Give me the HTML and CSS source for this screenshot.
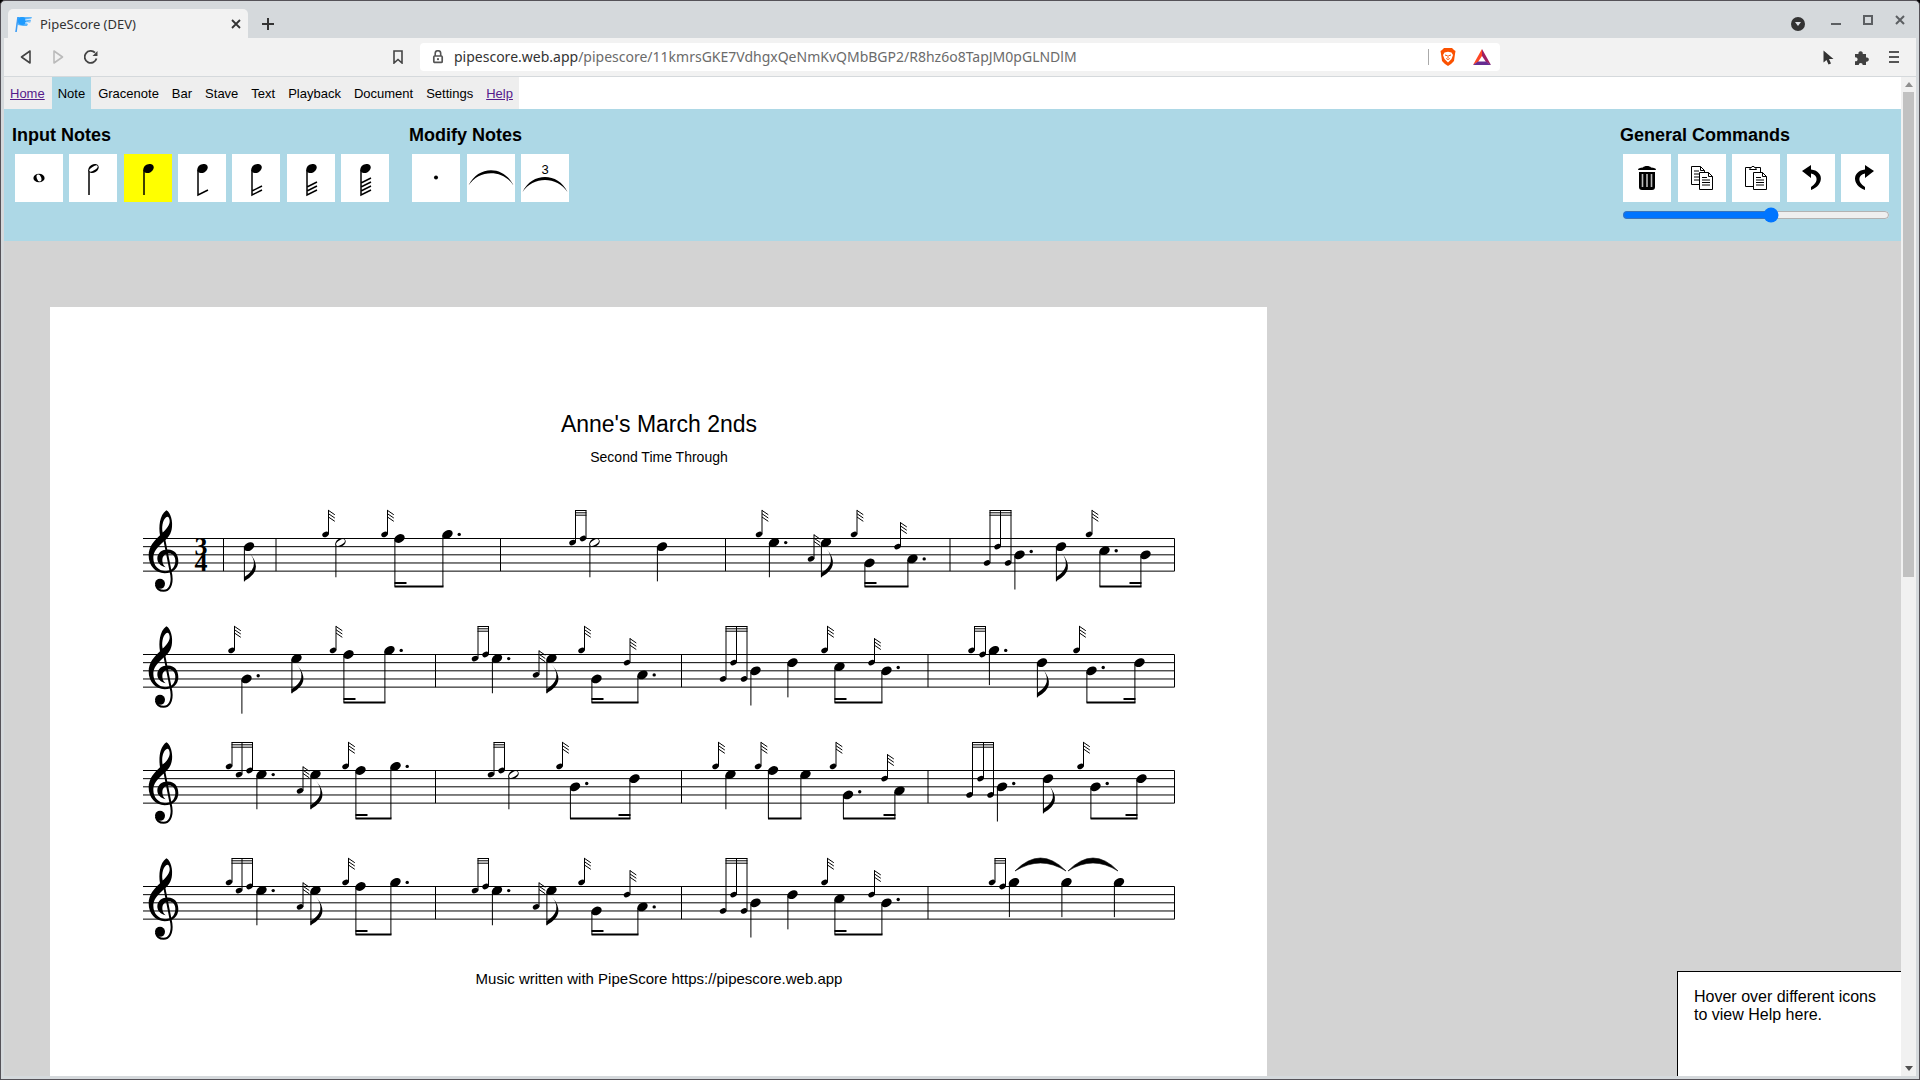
FILE: index.html
```html
<!DOCTYPE html>
<html lang="en">
<head>
<meta charset="utf-8">
<title>PipeScore (DEV)</title>
<link rel="stylesheet" href="styles.css">
</head>
<body>
<div class="window">
  <header class="tabstrip">
    <div class="tab">
      <svg class="tab-logo" width="18" height="18" viewBox="0 0 18 18"><path d="M1 17 3 2" stroke="#3d9df5" stroke-width="1.6" fill="none"/><circle cx="7" cy="6" r="4" fill="#1e9bff"/><path d="M3 2h14l-1 2-5 1 5 0-1 3-4 0 2 1-1 2-4 0-5-1z" fill="#1e9bff" opacity=".7"/><path d="M10 5l6-1M10 8l5-1" stroke="#cfe8ff" fill="none"/></svg>
      <span class="tab-title">PipeScore (DEV)</span>
      <button class="icon-btn" aria-label="Close tab"><svg width="10" height="10" viewBox="0 0 10 10"><path d="M1 1l8 8M9 1l-8 8" stroke="#333" stroke-width="1.8"/></svg></button>
    </div>
    <button class="icon-btn new-tab" aria-label="New tab"><svg width="12" height="12" viewBox="0 0 12 12"><path d="M6 0v12M0 6h12" stroke="#333" stroke-width="2"/></svg></button>
    <div class="window-controls">
      <button class="icon-btn" aria-label="Search tabs"><svg width="14" height="14" viewBox="0 0 14 14"><circle cx="7" cy="7" r="7" fill="#333"/><path d="M4 5h6l-3 4z" fill="#dee1e6"/></svg></button>
      <button class="icon-btn raised" aria-label="Minimise"><svg width="10" height="12" viewBox="0 0 10 12"><path d="M0 10h10" stroke="#5c5f62" stroke-width="2"/></svg></button>
      <button class="icon-btn raised" aria-label="Maximise"><svg width="10" height="10" viewBox="0 0 10 10"><path d="M1 1h8v8H1z" fill="none" stroke="#5c5f62" stroke-width="2"/></svg></button>
      <button class="icon-btn raised" aria-label="Close"><svg width="10" height="10" viewBox="0 0 10 10"><path d="M1 1l8 8M9 1l-8 8" stroke="#5c5f62" stroke-width="2"/></svg></button>
    </div>
  </header>
  <div class="toolbar">
    <div class="nav-buttons">
      <button class="icon-btn" aria-label="Back"><svg width="12" height="14" viewBox="0 0 12 14"><path d="M10 1v12L1.500 7z" fill="none" stroke="#444" stroke-width="1.600" stroke-linejoin="round"/></svg></button>
      <button class="icon-btn" aria-label="Forward"><svg width="12" height="14" viewBox="0 0 12 14"><path d="M2 1v12l8.500-6z" fill="none" stroke="#bbb" stroke-width="1.600" stroke-linejoin="round"/></svg></button>
      <button class="icon-btn" aria-label="Reload"><svg width="14" height="14" viewBox="0 0 14 14"><path d="M12.500 8.500A6 6 0 1 1 11 2.700" fill="none" stroke="#444" stroke-width="1.800"/><path d="M13.500 1v5H8.500z" fill="#444"/></svg></button>
    </div>
    <button class="icon-btn" aria-label="Bookmark"><svg width="10" height="14" viewBox="0 0 10 14"><path d="M1 1h8v12L5 9.500 1 13z" fill="none" stroke="#444" stroke-width="1.600"/></svg></button>
    <div class="address">
      <svg width="12" height="14" viewBox="0 0 12 14"><path d="M3.200 6V3.500a2.700 2.700 0 0 1 5.500 0V6" fill="none" stroke="#555" stroke-width="1.600"/><rect x="1.800" y="6" width="8.400" height="6.400" rx="1" fill="none" stroke="#555" stroke-width="1.700"/><circle cx="6" cy="9.200" r="1.100" fill="#555"/></svg>
      <span class="url">pipescore.web.app<span class="url-path">/pipescore/11kmrsGKE7VdhgxQeNmKvQMbBGP2/R8hz6o8TapJM0pGLNDlM</span></span>
      <span class="divider"></span>
      <svg class="shield" width="16" height="18" viewBox="0 0 16 18"><path d="M4 0h8l2 2 1.500 1-.5 3-1 7-3 3-3 2-3-2-3-3L1 6 .5 3 2 2z" fill="#fb5100"/><path d="M4.500 4.500 8 3.800l3.500.7L13 7l-1.500 4L8 14.500 4.500 11 3 7z" fill="#fff"/><path d="M5 7l2 .6M11 7l-2 .6M8 7v3M6.200 10.500 8 11.500l1.800-1" stroke="#fb5100" fill="none"/></svg>
      <svg width="18" height="16" viewBox="0 0 18 16"><path d="M9 0 0 16l5-3 4-6z" fill="#ff4724"/><path d="M9 0l9 16-5-3-4-6z" fill="#9e1f63"/><path d="M0 16h18l-5-3.500H5z" fill="#662d91"/></svg>
    </div>
    <div class="extensions">
      <button class="icon-btn" aria-label="Pointer extension"><svg width="11" height="15" viewBox="0 0 11 15"><path d="M.5.500v12l3-2.500 2 4.500 2.500-1-2-4.500h4.500z" fill="#333"/></svg></button>
      <button class="icon-btn" aria-label="Extensions"><svg width="15" height="15" viewBox="0 0 15 15"><path d="M1 4h3.500a2.200 2.200 0 1 1 4.200 0H12v3.500a2.200 2.200 0 1 1 0 4.200V15H8.700a2 2 0 1 0-4 0H1v-3.800a2 2 0 1 0 0-3.800z" fill="#404040"/></svg></button>
      <button class="icon-btn" aria-label="Menu"><svg width="10" height="12" viewBox="0 0 10 12"><path d="M0 1h10M0 6h10M0 11h10" stroke="#555" stroke-width="2"/></svg></button>
    </div>
  </div>

  <div class="viewport">
    <div class="app">
      <nav class="menu">
        <a class="menu-item" href="#home">Home</a>
        <button class="menu-item selected">Note</button>
        <button class="menu-item">Gracenote</button>
        <button class="menu-item">Bar</button>
        <button class="menu-item">Stave</button>
        <button class="menu-item">Text</button>
        <button class="menu-item">Playback</button>
        <button class="menu-item">Document</button>
        <button class="menu-item">Settings</button>
        <a class="menu-item" href="#help">Help</a>
      </nav>
      <div class="panel">
        <section class="group input-group">
          <h2>Input Notes</h2>
          <div class="tools">
            <button class="tool" aria-label="Semibreve"><svg viewBox="0 0 48 48"><ellipse cx="24" cy="24" rx="5.600" ry="4.300"/><ellipse cx="24" cy="24" rx="2.200" ry="3.600" fill="#fff" transform="rotate(-20 24 24)"/></svg></button>
            <button class="tool" aria-label="Minim"><svg viewBox="0 0 48 48"><path d="M20 16v25" class="line"/><ellipse cx="24.500" cy="14.500" rx="5.600" ry="4" transform="rotate(-30 24.500 14.500)"/><ellipse cx="24.500" cy="14.500" rx="4.800" ry="1.900" fill="#fff" transform="rotate(-32 24.500 14.500)"/></svg></button>
            <button class="tool active" aria-label="Crotchet"><svg viewBox="0 0 48 48"><path d="M20 16v25" class="line"/><ellipse cx="24.500" cy="14.500" rx="5.600" ry="4.200" transform="rotate(-30 24.500 14.500)"/></svg></button>
            <button class="tool" aria-label="Quaver"><svg viewBox="0 0 48 48"><path d="M20 16v25l10-5" class="line"/><ellipse cx="24.500" cy="14.500" rx="5.600" ry="4.200" transform="rotate(-30 24.500 14.500)"/></svg></button>
            <button class="tool" aria-label="Semiquaver"><svg viewBox="0 0 48 48"><path d="M20 16v25l10-5M20 37l10-5" class="line"/><ellipse cx="24.500" cy="14.500" rx="5.600" ry="4.200" transform="rotate(-30 24.500 14.500)"/></svg></button>
            <button class="tool" aria-label="Demisemiquaver"><svg viewBox="0 0 48 48"><path d="M20 16v25l10-5M20 37l10-5M20 33l10-5" class="line"/><ellipse cx="24.500" cy="14.500" rx="5.600" ry="4.200" transform="rotate(-30 24.500 14.500)"/></svg></button>
            <button class="tool" aria-label="Hemidemisemiquaver"><svg viewBox="0 0 48 48"><path d="M20 16v25l10-5M20 37l10-5M20 33l10-5M20 29l10-5" class="line"/><ellipse cx="24.500" cy="14.500" rx="5.600" ry="4.200" transform="rotate(-30 24.500 14.500)"/></svg></button>
          </div>
        </section>
        <section class="group modify-group">
          <h2>Modify Notes</h2>
          <div class="tools">
            <button class="tool" aria-label="Dotted"><svg viewBox="0 0 48 48"><circle cx="24" cy="23.500" r="2"/></svg></button>
            <button class="tool" aria-label="Tie"><svg viewBox="0 0 48 48"><path d="M1.500 31.500C11 11 37 11 46.500 31.500C36 15 12 15 1.500 31.500z"/></svg></button>
            <button class="tool" aria-label="Triplet"><svg viewBox="0 0 48 48"><path d="M1.500 38C11 18 37 18 46.500 38C36 22 12 22 1.500 38z"/><text x="24" y="20" class="triplet">3</text></svg></button>
          </div>
        </section>
        <section class="group general">
          <h2>General Commands</h2>
          <div class="tools">
            <button class="tool" aria-label="Delete"><svg viewBox="0 0 48 48"><path d="M15 16c0-2 2-2 5-2.500 1-2 7-2 8 0 3 .500 5 .500 5 2.500z"/><path d="M16 18h16v15q0 3-3 3H19q-3 0-3-3z"/><path d="M19.500 20v13M24 20v13M28.500 20v13" stroke="#bbb" stroke-width="1.600"/></svg></button>
            <button class="tool" aria-label="Copy"><svg viewBox="0 0 48 48"><path d="M13.500 12.500h9l4 4v14h-13zM22.500 12.500v4h4" class="sheet"/><path d="M16 17h5M16 20h8M16 23h8M16 26h8" class="rule"/><path d="M21.500 18.500h9l4 4v13h-13zM30.500 18.500v4h4" class="sheet"/><path d="M24 23.500h5M24 26h8M24 28.500h8M24 31h8" class="rule"/></svg></button>
            <button class="tool" aria-label="Paste"><svg viewBox="0 0 48 48"><path d="M13.500 13.500h15v19h-15z" class="sheet"/><path d="M17.500 15.500c0-2 2-1 2.500-3h2c.500 2 2.500 1 2.500 3z" class="sheet"/><path d="M21.500 18.500h9l4 4v13h-13zM30.500 18.500v4h4" class="sheet"/><path d="M24 23.500h5M24 26h8M24 28.500h8M24 31h8" class="rule"/></svg></button>
            <button class="tool" aria-label="Undo"><svg viewBox="0 0 48 48"><path d="M24 11v4.500C37 17 37.500 31 24 36v-3C32 28 31 21 24 19.500V24l-9-7z"/></svg></button>
            <button class="tool" aria-label="Redo"><svg viewBox="0 0 48 48"><path d="M24 11v4.500C11 17 10.500 31 24 36v-3C16 28 17 21 24 19.500V24l9-7z"/></svg></button>
          </div>
          <input class="zoom" type="range" min="0" max="100" value="56" aria-label="Zoom level">
        </section>
      </div>
      <main class="desk">
        <div class="paper">
          <svg class="score" id="score" viewBox="0 0 1217 1720" role="img" aria-label="Anne's March 2nds, sheet music">
            <defs>
              <g id="clef">
                <path fill-rule="evenodd" d="M109 60C122 66 130 95 125 118C121 138 108 148 97 158C82 172 70 185 70 203C70 228 88 243 106 243C128 243 136 228 136 212C136 198 128 190 117 190C106 190 97 197 97 210C97 220 101 227 107 231C92 228 82 218 82 205C82 188 96 178 114 178C134 178 145 193 145 213C145 235 128 249 104 249C76 249 56 226 56 196C56 168 74 150 90 135C86 110 88 75 109 60ZM112 80C102 82 93 105 98 127C110 118 120 103 119 92C118 84 116 80 112 80Z"/>
                <path d="M99 128 124 255C128 285 117 302 101 302C90 302 80 296 78 284" fill="none" stroke="#000" stroke-width="6"/>
                <circle cx="90" cy="281" r="15"/>
              </g>
              <ellipse id="head" rx="5.500" ry="4" transform="rotate(-28)"/>
              <ellipse id="grace" rx="3.400" ry="2.500" transform="rotate(-28)"/>
            </defs>
            <text class="title" x="609" y="125">Anne's March 2nds</text>
            <text class="subtitle" x="609" y="155">Second Time Through</text>
            <text class="time" x="151" y="248">3</text>
            <text class="time" x="151" y="264">4</text>
            <text class="credit" x="609" y="677">Music written with PipeScore https://pipescore.web.app</text>
          </svg>
        </div>
        <aside class="help">Hover over different icons to view Help here.</aside>
      </main>
    </div>
    <div class="scrollbar">
      <svg width="8" height="5" viewBox="0 0 8 5"><path d="M4 0l4 5H0z" fill="#8f8f8f"/></svg>
      <div class="track"><div class="thumb"></div></div>
      <svg width="8" height="5" viewBox="0 0 8 5"><path d="M4 5l4-5H0z" fill="#505050"/></svg>
    </div>
  </div>
</div>
<script src="score.js"></script>
</body>
</html>
```
FILE: styles.css
```css
* { box-sizing: border-box; }
body {
  margin: 0;
  background: #000;
  font-family: "Liberation Sans", Arial, sans-serif;
  color: #000;
}
button { font: inherit; color: inherit; border: 0; padding: 0; }

/* browser window */
.window {
  height: 100vh;
  display: flex;
  flex-direction: column;
  overflow: hidden;
  background: #d5d9dc;
  border: 1px solid #555258;
  border-radius: 5px 5px 0 0;
  padding: 0 3px 3px;
}
.icon-btn {
  display: flex;
  align-items: center;
  justify-content: center;
  background: none;
}
.tabstrip {
  height: 37px;
  flex: none;
  display: flex;
  padding: 8px 11px 0 4px;
}
.tab {
  width: 240px;
  display: flex;
  align-items: center;
  padding: 0 7px;
  background: #f2f2f2;
  border-radius: 5px 5px 0 0;
  font: 13px "Noto Sans", sans-serif;
  color: #333;
}
.tab-title { flex: 1; padding-left: 7px; }
.new-tab { padding: 0 14px; }
.window-controls {
  margin-left: auto;
  display: flex;
  align-items: center;
  gap: 22px;
}
.window-controls .icon-btn:first-child { margin-right: 4px; }
.raised { padding-bottom: 8px; }
.toolbar {
  height: 39px;
  flex: none;
  display: flex;
  align-items: center;
  background: #f2f2f2;
  border-bottom: 1px solid #d5d9dc;
}
.nav-buttons { display: flex; gap: 20px; padding-left: 16px; width: 389px; }
.address {
  width: 1080px;
  height: 28px;
  margin: 0 auto 0 17px;
  display: flex;
  align-items: center;
  padding: 0 9px 0 12px;
  background: #fff;
  border-radius: 4px;
}
.url {
  flex: 1;
  padding: 0 0 2px 10px;
  font: 14px "Noto Sans", sans-serif;
  color: #333;
}
.url-path { color: #6b6b6b; }
.divider { width: 1px; height: 16px; background: #aaa; }
.shield { margin: 0 17px 0 11px; }
.extensions { display: flex; align-items: center; gap: 20px; padding-right: 17px; }

/* page area */
.viewport { flex: 1; min-height: 0; display: flex; background: #fff; }
.app { flex: 1; min-width: 0; display: flex; flex-direction: column; }
.menu {
  align-self: flex-start;
  display: flex;
  gap: 1px;
  height: 32px;
  background: #eee;
  font-size: 13px;
  line-height: 32px;
}
.menu-item { padding: 1px 6px 0; background: none; }
a.menu-item { color: #551a8b; }
.menu-item.selected { background: #add8e6; }
.panel {
  display: flex;
  padding: 16px 12px 18px 8px;
  height: 132px;
  background: #add8e6;
}
.group { margin-right: 20px; }
.group h2 { margin: 0 0 8px; font-size: 18px; line-height: 21px; }
.input-group { width: 377px; }
.modify-group { width: 160px; }
.general { width: 269px; margin: 0 0 0 auto; }
.tools { display: flex; justify-content: space-between; padding-left: 3px; }
.tool { width: 48px; height: 48px; background: #fff; }
.tool.active { background: #ff0; }
.tool svg { display: block; width: 48px; height: 48px; }
.line { fill: none; stroke: #000; stroke-width: 1.5; }
.sheet { fill: #fff; stroke: #000; stroke-width: 1; }
.rule { stroke: #000; stroke-width: 1; }
.triplet { font-size: 13px; text-anchor: middle; }
.zoom { display: block; width: 268px; height: 16px; margin: 5px 0 0 2px; }

.desk {
  flex: 1;
  min-height: 0;
  position: relative;
  overflow: hidden;
  padding: 66px 46px 0;
  background: #d3d3d3;
}
.paper { width: 1217px; background: #fff; }
.score { display: block; width: 100%; }
.title, .subtitle, .credit { text-anchor: middle; }
.title { font-size: 23px; }
.subtitle { font-size: 14px; }
.credit { font-size: 15px; }
.time { font: bold 26px "Liberation Serif", serif; text-anchor: middle; }
.help {
  position: absolute;
  right: 0;
  bottom: 0;
  width: 224px;
  height: 105px;
  padding: 16px;
  background: #fff;
  border: solid #000;
  border-width: 1px 0 0 1px;
  font-size: 16px;
  line-height: 18px;
}
.scrollbar {
  width: 15px;
  display: flex;
  flex-direction: column;
  align-items: center;
  padding: 5px 0;
  background: #f1f1f1;
}
.track { flex: 1; width: 11px; padding: 5px 0; }
.thumb { height: 50%; background: #c1c1c1; }
```
FILE: score.js
```
// Vertical position of each pitch, in half spaces below the top line.
const PITCH = { G: 6, A: 5, B: 4, C: 3, D: 2, E: 1, F: 0, g: -1 };
const STEP = 4.08;
const LEFT = 93, RIGHT = 1124.5, FIRST = 231.5, STAVE_GAP = 116;

// n: note, q: quaver with a flag, h: minim, m: beamed pair, r: gracenote, e: gracenote group, s: slur.
// A trailing dot marks a dotted note; L and R give the side of the short inner beam.
const anne = 'e g 179 E 189 F 199.500|n E. 211.500|r A 250|q E 265.500|r g 295.500|m F 310.500 g. 345.500 L';
const second = 'e E 425 F 435.500|n E. 447|r A 486|q E 501.500|r g 531.500|m G 546.500 A. 592.500 L|r D 577';
const third = 'e G 673 D 683.500 G 694|n B 705.500|n D 742.500|r g 774.500|m C 789.500 B. 836.500 L|r D 821.500';
const staves = [
  { bars: [173.500, 226, 450.500, 675.500, 900], items: 'q D 199|r g 275.500|h E 290.500|r g 334.500|m F 349.500 g. 397.500 L|e E 522.500 F 533|h E 544.500|n D 612|r g 709|n E. 724|r A 761|q E 776|r g 804|m G 819.500 A. 862.500 L|r D 847.500|e G 937 D 947.500 G 958|n B. 969.500|q D 1011|r g 1039|m C. 1054.500 B 1095.500 R' },
  { bars: [385.500, 631.500, 878], items: 'r g 181.500|n G. 196.500|q E 246.500|r g 283|m F 298.500 g. 339.500 L|' + second + '|' + third + '|e g 921.500 F 932.500|n g. 944|q D 992|r g 1026.500|m B. 1041.500 D 1089.500 R' },
  { bars: [385.500, 631.500, 878], items: anne + '|e E 441 F 451.500|h E 463.500|r g 509.500|m B. 525 D 584.500 R|r g 665.500|n E 680.500|r g 708|m F 723 E 755.500|r g 783|m G. 798 A 849.500 R|r D 834.500|e G 919.500 D 930.500 G 940.500|n B. 952|q D 998|r g 1030.500|m B. 1045.500 D 1091.500 R' },
  { bars: [385.500, 631.500, 878], items: anne + '|' + second + '|' + third + '|e g 942 F 952.500|n g 964|n g 1016.500|n g 1069|s 965 1016|s 1018 1068' }
];

const line = (x1, y1, x2, y2, w = 1) =>
  `<path d="M${x1} ${y1}L${x2} ${y2}" stroke="#000" stroke-width="${w}"/>`;
const head = (id, x, y) => `<g transform="translate(${x} ${y})"><use href="#${id}"/></g>`;

function note(x, pitch, top, stemEnd, hollow) {
  const y = top + PITCH[pitch[0]] * STEP;
  let out = head('head', x, y) + line(x - 4.600, y + 1, x - 4.600, stemEnd || y + 34.700);
  if (hollow) out += `<ellipse rx="4.900" ry="2.400" fill="#fff" transform="translate(${x} ${y}) rotate(-32)"/>`;
  if (pitch[1]) out += `<circle cx="${x + 11.700}" cy="${PITCH[pitch[0]] % 2 ? y : y - 3.300}" r="1.700"/>`;
  return out;
}

function draw(item, top) {
  const [kind, ...a] = item.split(' ');
  const y = top + (PITCH[a[0] && a[0][0]] || 0) * STEP, x = +a[1];
  if (kind === 'n') return note(x, a[0], top);
  if (kind === 'h') return note(x, a[0], top, 0, true);
  if (kind === 'q') {
    const sx = x - 5, b = y + 34.700;
    return note(x, a[0], top) + `<path d="M${sx} ${b}V${b - 4}Q${sx + 17} ${b - 15} ${sx + 5} ${b - 29}Q${sx + 21} ${b - 11} ${sx} ${b}z"/>`;
  }
  if (kind === 'r') {
    let out = head('grace', x, y) + line(x + 3, y, x + 3, y - 24.500);
    for (let i = 0; i < 3; i++) out += line(x + 3, y - 24 + i * 3.300, x + 9.300, y - 19.700 + i * 3.300);
    return out;
  }
  if (kind === 'e') {
    let out = '', last = x;
    for (let i = 0; i < a.length; i += 2) {
      last = +a[i + 1];
      const gy = top + PITCH[a[i]] * STEP;
      out += head('grace', last, gy) + line(last + 3, gy, last + 3, top - 28);
    }
    for (const o of [28, 25.700, 23.300]) out += line(x + 2.500, top - o, last + 3.500, top - o);
    return out;
  }
  if (kind === 'm') {
    const x2 = +a[3], end = top + 48;
    let out = note(x, a[0], top, end) + note(x2, a[2], top, end) + line(x - 5, end, x2 - 4, end, 2);
    if (a[4] === 'L') out += line(x - 5, top + 44.500, x + 7, top + 44.500, 2);
    if (a[4] === 'R') out += line(x2 - 16, top + 44.500, x2 - 4, top + 44.500, 2);
    return out;
  }
  const l = +a[0], r = +a[1], b = top - 15.500, m = (l + r) / 2;
  return `<path d="M${l} ${b}Q${m} ${b - 26} ${r} ${b}Q${m} ${b - 16} ${l} ${b}z" stroke="#000" stroke-width="0.600"/>`;
}

let markup = '';
staves.forEach((stave, i) => {
  const top = FIRST + i * STAVE_GAP, bottom = top + STEP * 8;
  for (let n = 0; n < 5; n++) markup += line(LEFT, top + n * 2 * STEP, RIGHT, top + n * 2 * STEP);
  for (const x of [...stave.bars, RIGHT]) markup += line(x, top, x, bottom);
  markup += `<g transform="translate(80 ${top - 48.300}) scale(0.3333)"><use href="#clef"/></g>`;
  markup += stave.items.split('|').map(item => draw(item, top)).join('');
});
document.getElementById('score').insertAdjacentHTML('beforeend', markup);
```
